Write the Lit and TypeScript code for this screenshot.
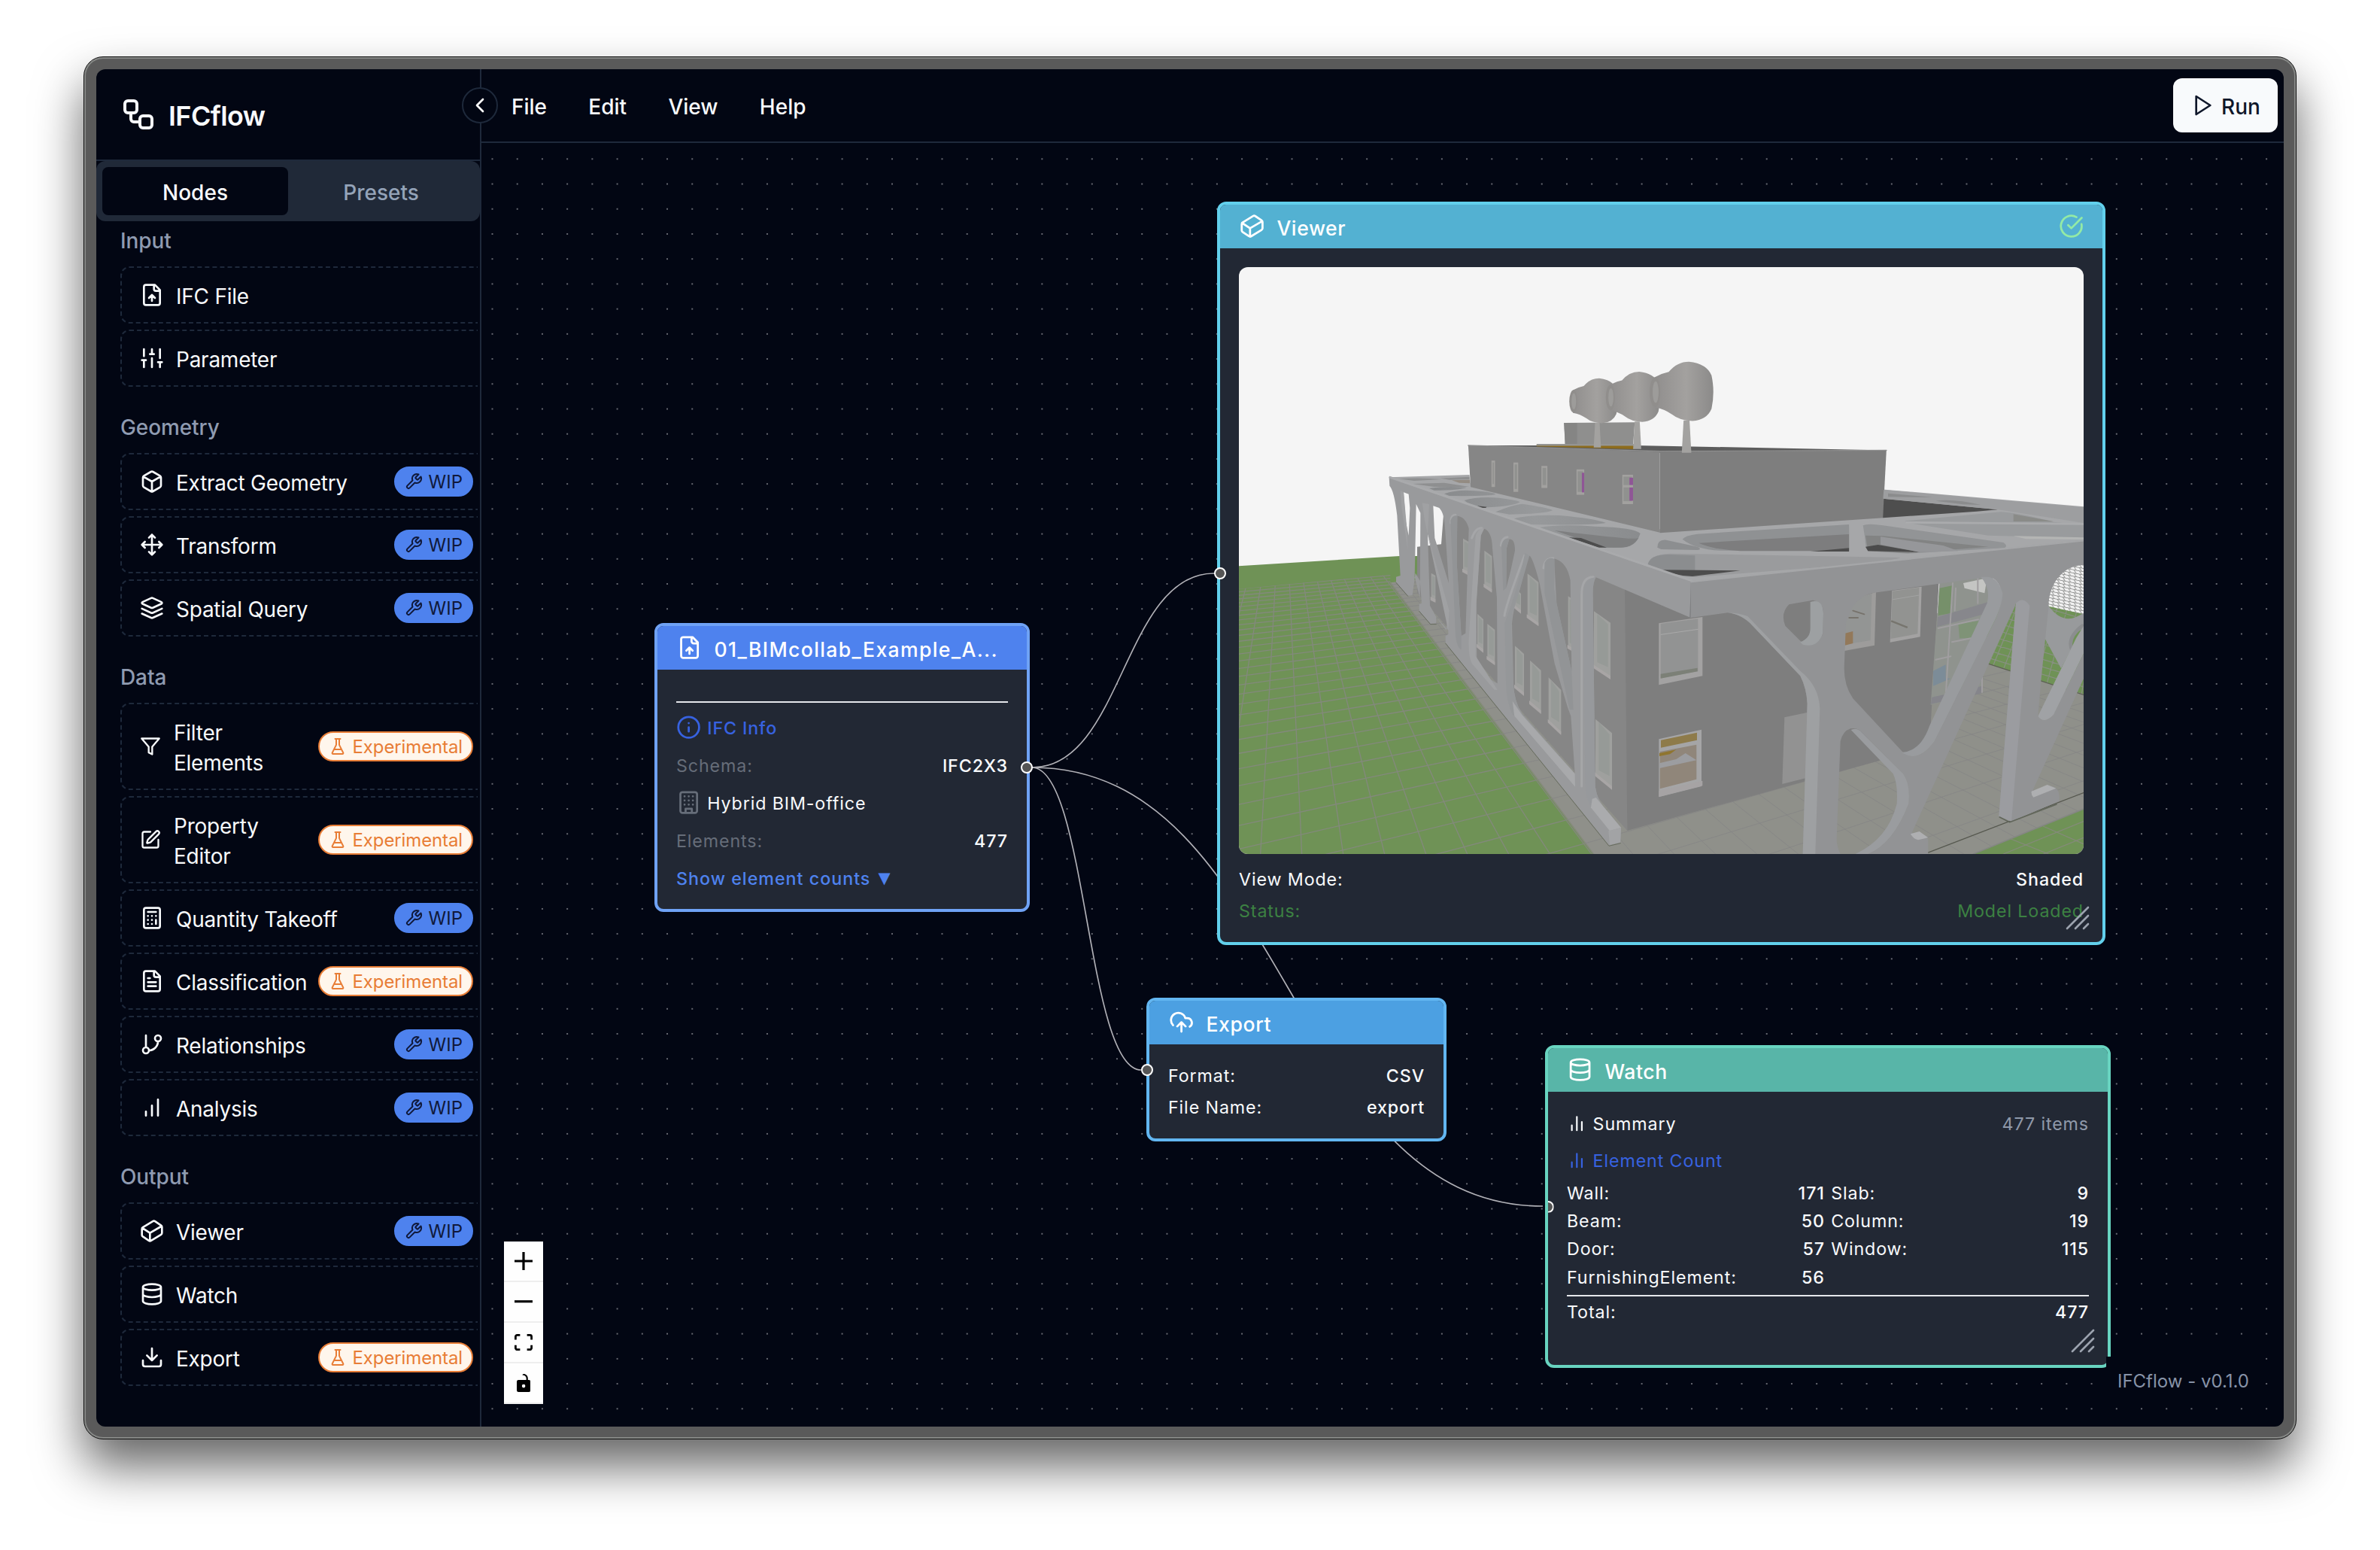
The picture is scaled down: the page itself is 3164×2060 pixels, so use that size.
import { LitElement, html, css, svg, nothing } from "lit";
import { customElement, property } from "lit/decorators.js";

const FILE = "M15 2H6a2 2 0 0 0-2 2v16a2 2 0 0 0 2 2h12a2 2 0 0 0 2-2V7Z M14 2v4a2 2 0 0 0 2 2h4";
const ICONS: Record<string, string> = {
  workflow: "M5 3h4a2 2 0 0 1 2 2v4a2 2 0 0 1-2 2H5a2 2 0 0 1-2-2V5a2 2 0 0 1 2-2z M7 11v4a2 2 0 0 0 2 2h4 M15 13h4a2 2 0 0 1 2 2v4a2 2 0 0 1-2 2h-4a2 2 0 0 1-2-2v-4a2 2 0 0 1 2-2z",
  chevron: "m15 18-6-6 6-6",
  play: "M5 3 19 12 5 21Z",
  fileUp: FILE + " M12 12v6 M15 15l-3-3-3 3",
  sliders: "M4 21v-7 M4 10V3 M12 21v-9 M12 8V3 M20 21v-5 M20 12V3 M2 14h4 M10 8h4 M18 16h4",
  box: "M21 8a2 2 0 0 0-1-1.73l-7-4a2 2 0 0 0-2 0l-7 4A2 2 0 0 0 3 8v8a2 2 0 0 0 1 1.73l7 4a2 2 0 0 0 2 0l7-4A2 2 0 0 0 21 16Z M3.3 7l8.7 5 8.7-5 M12 22V12",
  move: "M12 2v20 M2 12h20 M19 9l3 3-3 3 M5 9l-3 3 3 3 M9 5l3-3 3 3 M15 19l-3 3-3-3",
  layers: "M12.83 2.18a2 2 0 0 0-1.66 0L2.6 6.08a1 1 0 0 0 0 1.83l8.58 3.91a2 2 0 0 0 1.66 0l8.58-3.9a1 1 0 0 0 0-1.83Z M22 17.65l-9.17 4.16a2 2 0 0 1-1.66 0L2 17.65 M22 12.65l-9.17 4.16a2 2 0 0 1-1.66 0L2 12.65",
  filter: "M22 3H2l8 9.46V19l4 2v-8.54Z",
  pen: "M12 3H5a2 2 0 0 0-2 2v14a2 2 0 0 0 2 2h14a2 2 0 0 0 2-2v-7 M18.375 2.625a1 1 0 0 1 3 3l-9.013 9.014a2 2 0 0 1-.853.505l-2.873.84a.5.5 0 0 1-.62-.62l.84-2.873a2 2 0 0 1 .506-.852z",
  calculator: "M6 2h12a2 2 0 0 1 2 2v16a2 2 0 0 1-2 2H6a2 2 0 0 1-2-2V4a2 2 0 0 1 2-2z M8 6h8 M16 14v4 M16 10h.01 M12 10h.01 M8 10h.01 M12 14h.01 M8 14h.01 M12 18h.01 M8 18h.01",
  fileText: FILE + " M10 9H8 M16 13H8 M16 17H8",
  branch: "M6 3v12 M21 6a3 3 0 1 1-6 0a3 3 0 1 1 6 0 M9 18a3 3 0 1 1-6 0a3 3 0 1 1 6 0 M18 9a9 9 0 0 1-9 9",
  bars: "M12 20V10 M18 20V4 M6 20v-4",
  bars2: "M18 20V10 M12 20V4 M6 20v-6",
  cuboid: "M21.12 6.4l-6.05-4.06a2 2 0 0 0-2.17-.05L2.95 8.41a2 2 0 0 0-.95 1.7v5.82a2 2 0 0 0 .88 1.66l6.05 4.07a2 2 0 0 0 2.17.05l9.95-6.12a2 2 0 0 0 .95-1.7V8.06a2 2 0 0 0-.88-1.66Z M10 22v-8L2.25 8.85 M10 14l11.77-6.86",
  database: "M21 5a9 3 0 1 1-18 0a9 3 0 1 1 18 0 M3 5V19A9 3 0 0 0 21 19V5 M3 12A9 3 0 0 0 21 12",
  download: "M21 15v4a2 2 0 0 1-2 2H5a2 2 0 0 1-2-2v-4 M7 10l5 5 5-5 M12 15V3",
  wrench: "M14.7 6.3a1 1 0 0 0 0 1.4l1.6 1.6a1 1 0 0 0 1.4 0l3.77-3.77a6 6 0 0 1-7.94 7.94l-6.91 6.91a2.12 2.12 0 0 1-3-3l6.91-6.91a6 6 0 0 1 7.94-7.94l-3.76 3.76z",
  flask: "M10 2v7.527a2 2 0 0 1-.211.896L4.72 20.55a1 1 0 0 0 .9 1.45h12.76a1 1 0 0 0 .9-1.45l-5.069-10.127A2 2 0 0 1 14 9.527V2 M8.5 2h7 M7 16h10",
  info: "M22 12a10 10 0 1 1-20 0a10 10 0 1 1 20 0 M12 16v-4 M12 8h.01",
  building: "M6 2h12a2 2 0 0 1 2 2v16a2 2 0 0 1-2 2H6a2 2 0 0 1-2-2V4a2 2 0 0 1 2-2z M9 22v-4h6v4 M8 6h.01 M12 6h.01 M16 6h.01 M8 10h.01 M12 10h.01 M16 10h.01 M8 14h.01 M12 14h.01 M16 14h.01",
  check: "M21.801 10A10 10 0 1 1 17 3.335 M9 11l3 3L22 4",
  upload: "M4 14.899A7 7 0 1 1 15.71 8h1.79a4.5 4.5 0 0 1 2.5 8.242 M12 12v9 M16 16l-4-4-4 4",
};

const icon = (name: string, size: number) => html`<svg
  width=${size} height=${size} viewBox="0 0 24 24" fill="none" stroke="currentColor"
  stroke-width="2" stroke-linecap="round" stroke-linejoin="round" style="flex:none;display:block"
><path d=${ICONS[name]}></path></svg>`;

type Item = { icon: string; label: string; tag?: "wip" | "exp"; wrap?: boolean };
const SECTIONS: { title: string; items: Item[] }[] = [
  { title: "Input", items: [{ icon: "fileUp", label: "IFC File" }, { icon: "sliders", label: "Parameter" }] },
  {
    title: "Geometry",
    items: [
      { icon: "box", label: "Extract Geometry", tag: "wip" },
      { icon: "move", label: "Transform", tag: "wip" },
      { icon: "layers", label: "Spatial Query", tag: "wip" },
    ],
  },
  {
    title: "Data",
    items: [
      { icon: "filter", label: "Filter Elements", tag: "exp", wrap: true },
      { icon: "pen", label: "Property Editor", tag: "exp", wrap: true },
      { icon: "calculator", label: "Quantity Takeoff", tag: "wip" },
      { icon: "fileText", label: "Classification", tag: "exp" },
      { icon: "branch", label: "Relationships", tag: "wip" },
      { icon: "bars", label: "Analysis", tag: "wip" },
    ],
  },
  {
    title: "Output",
    items: [
      { icon: "cuboid", label: "Viewer", tag: "wip" },
      { icon: "database", label: "Watch" },
      { icon: "download", label: "Export", tag: "exp" },
    ],
  },
];

@customElement("flow-sidebar")
class FlowSidebar extends LitElement {
  static styles = css`
    :host { display: flex; flex-direction: column; width: 510px; border-right: 2px solid #1e293b; color: #f8fafc; }
    .brand { display: flex; align-items: center; gap: 16px; height: 120px; padding-left: 32px; border-bottom: 2px solid #1e293b; font-size: 36px; font-weight: 600; letter-spacing: -0.6px; }
    .brand span { margin: 2px 0 -2px; }
    .tabs { display: grid; grid-template-columns: 1fr 1fr; height: 80px; padding: 8px; background: #202938; border-radius: 12px; box-sizing: border-box; font-weight: 500; }
    .tab { display: flex; align-items: center; justify-content: center; border-radius: 8px; color: #94a3b8; padding-top: 3px; }
    .tab.on { background: #020613; color: #f8fafc; }
    .list { flex: 1; overflow: hidden; padding: 4px 0 0 32px; margin-right: 3px; display: flex; flex-direction: column; gap: 32px; }
    .group { display: flex; flex-direction: column; gap: 8px; }
    .title { line-height: 40px; margin: 2px 0 6px; color: #8f9bb1; font-weight: 500; letter-spacing: -0.1px; }
    .item { display: flex; align-items: center; gap: 16px; width: 495px; box-sizing: border-box; padding: 16px 24px; border: 2px dashed #1e293b; border-radius: 12px; line-height: 40px; }
    .label { flex: 1; min-width: 0; white-space: nowrap; margin: 2px 0 -2px; letter-spacing: -0.25px; }
    .wrap .label { white-space: normal; margin-left: 1px; }
    .tag { display: flex; align-items: center; gap: 8px; height: 40px; flex: none; padding: 0 12px; box-sizing: border-box; border: 2px solid #4e82ee; border-radius: 20px; background: #4e82ee; color: #10193a; font-size: 24px; white-space: nowrap; }
    .tag span { margin: 1px 0 -1px; }
    .tag.exp { border-color: #e87d36; background: #fff6ec; color: #e87d36; letter-spacing: -0.12px; }
  `;
  render() {
    return html`
      <div class="brand">${icon("workflow", 48)}<span>IFCflow</span></div>
      <div class="tabs"><div class="tab on">Nodes</div><div class="tab">Presets</div></div>
      <div class="list">
        ${SECTIONS.map((s) => html`<div class="group">
          <div class="title">${s.title}</div>
          ${s.items.map((i) => html`<div class="item ${i.wrap ? "wrap" : ""}">
            ${icon(i.icon, i.wrap ? 28 : 32)}
            <span class="label">${i.label}</span>
            ${i.tag === "wip" ? html`<span class="tag">${icon("wrench", 24)}<span>WIP</span></span>` : nothing}
            ${i.tag === "exp" ? html`<span class="tag exp">${icon("flask", 24)}<span>Experimental</span></span>` : nothing}
          </div>`)}
        </div>`)}
      </div>
    `;
  }
}

/* ---- 3D scene of the model viewer ---- */

const poly = (points: string, fill: string) => svg`<polygon points=${points} fill=${fill}></polygon>`;
const shape = (d: string, fill: string) => svg`<path d=${d} fill=${fill}></path>`;
const line = (d: string, stroke: string, w: number) => svg`<path d=${d} fill="none" stroke=${stroke} stroke-width=${w} stroke-linecap="round" stroke-linejoin="round"></path>`;

/* vanishing points of the two ground directions */
const LEFT_VP = [-343, -83];
const RIGHT_VP = [6710, -133];

const groundRows = () => {
  let d = "";
  for (let k = -7; k < 34; k++) {
    const y = -83 + 1 / (6.653e-4 + 4.1e-5 * k);
    const slope = (RIGHT_VP[1] - y) / RIGHT_VP[0];
    d += `M-540 ${(y - 540 * slope).toFixed(1)}L2900 ${(y + 2900 * slope).toFixed(1)}`;
  }
  return d;
};
const groundColumns = () => {
  let d = "";
  for (let x = -4063; x < 4600; x += 165) d += `M${LEFT_VP[0]} ${LEFT_VP[1]}L${x} 1560`;
  return d;
};

const windowLeft = (x: number, y: number, w: number, h: number, skew: number) => svg`
  <polygon points="${x},${y} ${x + w},${y + skew} ${x + w},${y + h + skew} ${x},${y + h}" fill="#9fa09e"></polygon>
  <polygon points="${x + w * 0.2},${y + 12} ${x + w * 0.85},${y + skew + 6} ${x + w * 0.85},${y + h + skew * 0.4 - 18} ${x + w * 0.2},${y + h - 18}" fill="#969a97"></polygon>
  <polygon points="${x - 3},${y + h - 10} ${x + w},${y + h + skew - 10} ${x + w},${y + h + skew + 4} ${x - 3},${y + h + 4}" fill="#a8a5a5"></polygon>`;

const tree = (x: number, y: number, s: number) => svg`<g transform="translate(${x} ${y}) scale(${s})">
  <path d="M-5 58L5 58L8 124L-8 124Z" fill="#a3a2a0"></path>
  <path d="M-54 -30Q-42 -38 -30 -41Q-16 -62 4 -62Q34 -58 42 -34Q48 0 42 34Q34 57 10 59Q-12 58 -24 46Q-38 34 -54 31Q-60 2 -54 -30Z" fill="url(#bark)"></path>
  <ellipse cx="-53" cy="0" rx="9" ry="30" fill="#908e8c"></ellipse>
  <ellipse cx="-52" cy="0" rx="5" ry="22" fill="#9d9c9a"></ellipse></g>`;

const HOLES_LEFT =
  "M138 118L158 125L163 180L158 290L146 230Z" +
  "M188 165L205 200L203 540L182 455Z" +
  "M256 172L280 180Q300 200 303 260L318 480L262 300Z" +
  "M234 285L316 590L308 668L268 615L243 570Z" +
  "M352 212Q385 215 398 262L385 680L368 690L350 400Z" +
  "M455 262Q490 270 492 340L510 540L512 880Q450 850 430 790L428 560L446 290Z" +
  "M558 305Q582 302 582 350L565 430L547 500L549 340Z" +
  "M636 370Q650 365 680 480L740 800L792 975L805 1010L821 1240L610 1000Q578 950 576 880L570 640Q575 580 600 510Z" +
  "M738 382Q790 395 803 470L808 830L748 560Z";

const scene = () => html`<svg width="1123" height="780" viewBox="1647 355 1123 780" preserveAspectRatio="none" style="display:block">
  <defs>
    <linearGradient id="bark"><stop offset="0" stop-color="#8f8d8c"></stop><stop offset=".55" stop-color="#a3a19f"></stop><stop offset="1" stop-color="#8b8a89"></stop></linearGradient>
    <linearGradient id="curve"><stop offset="0" stop-color="#87898b"></stop><stop offset=".5" stop-color="#97999b"></stop><stop offset="1" stop-color="#8a8c8e"></stop></linearGradient>
    <clipPath id="lawn"><polygon points="-540,505 85,446 85,478 895,1560 -540,1560"></polygon></clipPath>
    <clipPath id="paving"><polygon points="85,478 195,470 1030,1467 2235,1130 2460,800 2850,930 2850,1378 2410,1560 895,1560"></polygon></clipPath>
    <clipPath id="lawnFar"><polygon points="1175,800 1290,560 1560,560 1560,925"></polygon></clipPath>
    <pattern id="mesh" width="22" height="13" patternUnits="userSpaceOnUse" patternTransform="skewY(11)"><rect width="22" height="13" fill="#f1f1f1"></rect><path d="M0 1H22M3 1L12 13" stroke="#8e8f8e" stroke-width="3"></path></pattern>
  </defs>
  <rect x="1647" y="355" width="1123" height="780" fill="#f5f5f5"></rect>
  <g transform="translate(1820 615) scale(.33333)">
    ${poly("-540,413 122,372 400,372 400,600 1000,1560 -540,1560", "#6f9256")}
    ${poly("85,478 200,465 400,500 2235,600 2850,600 2850,1560 895,1560", "#8f908a")}
    <g clip-path="url(#lawn)">${line(groundRows(), "#83897c", 4)}${line(groundColumns(), "#83897c", 4)}</g>
    ${line("M85 478L895 1560", "#858a7b", 5)}
    <g clip-path="url(#paving)">${line(groundRows(), "#858686", 2.5)}${line(groundColumns(), "#858686", 2.5)}</g>
    ${poly("192,335 288,325 300,170 1025,480 1030,1467 192,519", "#868686")}
    ${poly("1020,480 1560,400 2275,440 2235,1132 1030,1467", "#7e7e7e")}
    ${windowLeft(248, 440, 17, 104, 10)}${windowLeft(375, 302, 24, 130, 14)}${windowLeft(460, 350, 30, 142, 22)}
    ${windowLeft(432, 602, 24, 130, 22)}${windowLeft(472, 642, 30, 138, 24)}${windowLeft(582, 500, 24, 76, 22)}
    ${windowLeft(632, 442, 44, 172, 34)}${windowLeft(582, 730, 36, 164, 32)}${windowLeft(642, 788, 44, 170, 40)}
    ${windowLeft(716, 856, 50, 176, 50)}${windowLeft(794, 532, 30, 204, 20)}
    ${windowLeft(897, 592, 66, 222, 46)}${windowLeft(903, 1022, 66, 222, 56)}
    ${poly("1156,640 1330,615 1330,850 1156,886", "#a3a2a2")}${poly("1163,642 1312,622 1312,832 1163,858", "#929393")}${poly("1163,842 1310,818 1310,832 1163,860", "#7c8077")}${line("M1165 685L1312 664", "#aaa", 3)}
    ${poly("1156,1102 1326,1064 1326,1290 1156,1333", "#a5a5a6")}${poly("1164,1106 1308,1076 1308,1106 1164,1136", "#8e7b4a")}${poly("1160,1152 1306,1124 1306,1262 1160,1300", "#90867a")}${poly("1158,1198 1225,1182 1262,1158 1306,1186 1158,1218", "#9c9da0")}${poly("1158,1158 1225,1144 1200,1162 1158,1170", "#8f752f")}
    ${poly("1156,1308 1330,1268 1330,1288 1156,1332", "#a6a3a4")}
  </g>
  <g transform="translate(2250 615) scale(.33333)">
    ${poly("1150,520 1560,400 1560,925 1175,800", "#6f9256")}
    <g clip-path="url(#lawnFar)" >${line(Array.from({ length: 16 }, (_, i) => `M1120 ${460 + i * 30}L1580 ${600 + i * 30}M${1100 + i * 40} 560L${900 + i * 50} 930`).join(""), "#899083", 3.5)}</g>
    ${line("M1175 800L1560 925", "#5d6153", 4)}
    ${poly("1410,400 1560,400 1560,604 1420,572", "url(#mesh)")}
    ${poly("985,480 1200,440 1150,915 950,965", "#8f938e")}
    ${poly("985,500 1035,490 1030,600 980,610", "#76906a")}${poly("1080,480 1175,460 1165,520 1085,500", "#c4c5c3")}${poly("1060,640 1145,630 1130,700 1065,700", "#7f9377")}
    ${poly("978,615 1180,555 1175,600 975,655", "#87878c")}${poly("960,830 1010,805 1010,860 1030,860 960,890", "#7c8c98")}${poly("955,935 1155,890 1150,920 950,962", "#85858b")}
    ${line("M1038 480L1010 930M1138 460V560M970 785L1030 772M980 660L1140 625M1035 715L1110 700M1155 830V915M1050 500L1046 590", "#a09ea0", 6)}
    ${poly("595,560 732,515 726,728 606,750", "#9d9c9b")}${poly("600,560 715,522 710,708 606,725", "#939594")}${poly("608,680 640,672 640,720 608,728", "#93795a")}${line("M640 590L685 604M625 618L660 618", "#77736c", 6)}
    ${poly("796,510 914,494 908,694 788,716", "#a3a2a2")}${poly("798,512 904,498 898,682 790,702", "#929391")}${line("M795 632L855 656", "#77756e", 7)}${line("M800 545L905 528", "#a2a3a2", 3)}
    ${poly("367,1015 460,995 450,1258 358,1281", "#929292")}
    ${line("M930 1558L1560 1316", "#56584f", 4)}
    ${poly("1120,1560 1560,1380 1560,1560", "#6f9256")}${line("M1120 1560L1560 1380", "#858784", 5)}
    ${line("M1270 1500L1420 1560M1400 1450L1560 1520M1240 1560L1560 1430M1400 1560L1560 1495", "#858a7b", 3.5)}
  </g>

  <g transform="translate(1600 240) scale(.7908 .6505)">
    ${poly("312,606 447,601 449,620 767,712 1142,684 1142,631 1480,666 1480,735 820,822", "#a6a7a9")}
    ${poly("1142,650 1335,672 1300,676 1142,689", "#4e4e4e")}
    ${poly("606,495 725,494 722,542 608,541", "#8f8f8e")}${poly("606,495 628,495 628,541 608,541", "#858584")}
    ${poly("445,541 725,541 1148,551 767,556", "#5c5c5c")}${poly("560,539 725,539 725,549 560,543", "#8d6c1d")}${poly("560,538 725,538 725,542 560,542", "#959593")}
    ${poly("445,541 767,554 767,719 449,626", "#868686")}${poly("767,554 1148,551 1142,689 767,720", "#7e7e7e")}
    ${line("M445 541L767 553L1148 551", "#8e8e8e", 2)}
    ${tree(662, 451, 0.76)}${tree(729, 443, 0.85)}${tree(812, 432, 1)}
    ${[[484, 572, 6, 54], [521, 576, 8, 60], [568, 583, 10, 45], [627, 590, 13, 52], [704, 601, 18, 60]].map(([x, y, w, h]) => svg`<rect x=${x} y=${y} width=${w} height=${h} fill="#a2a19f"></rect><rect x=${x + 2} y=${y + 4} width=${w - 4} height=${h - 10} fill="#90918f"></rect>`)}
    <rect x="636" y="597" width="4" height="40" fill="#8f5696"></rect><rect x="716" y="607" width="6" height="47" fill="#8f5696"></rect><rect x="705" y="622" width="17" height="5" fill="#a2a19f"></rect>
  </g>

  <g transform="translate(1820 615) scale(.33333)">
    ${shape("M120 64Q200 58 290 66L180 72ZM285 62L400 56V66L320 68ZM175 84L300 80L400 96L260 96Z", "#8e8f90")}${poly("330,70 402,68 402,82 360,80", "#938b82")}
    ${shape("M240 102Q300 92 390 98Q360 110 260 110ZM300 124Q350 106 420 112Q500 118 505 126Q480 134 320 132ZM380 150Q430 134 520 140Q610 152 600 158Q560 176 450 178Q400 170 380 150ZM505 196Q570 168 610 164Q720 180 732 190Q700 204 560 206ZM575 224Q640 206 760 210Q900 222 945 240Q900 250 640 246ZM680 258Q760 244 900 254Q1060 258 1082 282Q1070 320 1040 332Q960 350 860 320Q720 285 680 258Z", "url(#curve)")}
    ${shape("M740 270Q900 290 1010 300Q1060 305 1075 300Q1050 340 1000 338L940 338Z", "#7e7f80")}${poly("795,298 845,300 948,338 915,338", "#4d4d4d")}${poly("432,172 470,176 465,180 445,180", "#4d4d4d")}
    ${shape("M1150 338Q1150 305 1185 308L1310 335Q1330 345 1310 348L1165 345Z", "#8c8e90")}
    ${shape("M1250 305Q1260 290 1310 284L1915 246L1920 350L1400 350Q1300 345 1250 305Z", "#8f9193")}
    ${shape("M1315 320L1915 285V352L1480 352Q1370 345 1315 320Z", "#7d7d7e")}${poly("1760,354 1915,340 1915,354", "#4c4c4c")}
    ${shape("M1112 410Q1120 365 1200 362L2120 378Q2080 395 1860 412L1300 456Q1150 450 1112 410Z", "#9a9b9d")}${shape("M1112 405Q1120 365 1200 366L1300 370V430L1170 428Z", "#8b8d8f")}${shape("M1165 427L1480 430L1290 453Q1220 450 1165 427Z", "#4d4d4d")}
    <path d="M80 58L1288 474L1283 618L905 457Q890 480 893 540L902 1290Q910 1350 950 1390L1005 1455L1003 1515L957 1525L305 718V690L316 684L316 668L268 615V640L245 642L200 590V563L210 560L203 470L185 440L173 528L155 530L108 476V455L125 450L112 210Q100 110 82 92Z${HOLES_LEFT}" fill="#999a9c" fill-rule="evenodd"></path>
    ${line("M84 58L1286 470", "#a9aaac", 9)}
    ${line("M326 240Q326 208 345 208M410 300Q425 258 450 260M526 330Q530 298 552 296M540 610Q545 570 620 370M696 420Q700 380 735 380M848 1290V520Q850 455 895 455", "#a5a6a8", 9)}
    ${shape("M325 230Q335 206 352 212L350 400L368 690V745Q352 740 345 690Z", "#929496")}${shape("M425 290Q438 258 460 262L446 290L428 560L425 770L512 905L500 905L410 800Q395 770 398 700Z", "#a1a2a4")}
    ${shape("M528 330Q535 298 560 304L549 340L547 500L535 510Z", "#929496")}${shape("M555 600Q590 510 622 360L640 370L600 510L572 600Q566 640 568 700L576 900Q585 965 610 1000L821 1240L822 1292L570 1000Q548 950 546 880L541 640Z", "#959799")}${shape("M572 950L610 1005L821 1240L822 1292L580 1010Z", "#a8a9ab")}
    ${shape("M700 400Q712 372 740 384L738 500L748 560L808 830L815 985L800 985L700 520Z", "#929496")}
    ${shape("M855 520Q860 460 905 457Q890 480 893 540L902 1290Q910 1350 950 1390L1005 1455L960 1465L885 1370Q862 1330 862 1270Z", "#97999c")}${poly("890,1340 905,1335 1005,1455 960,1468 885,1375", "#aaabad")}${poly("955,1468 1005,1455 1002,1513 960,1524", "#a2a3a5")}
    ${shape("M125 110L138 118L150 250L155 350L130 180ZM212 160L240 165L234 285L320 590L316 668L222 230Z", "#a0a1a3")}
    ${line("M108 478L155 532M200 592L245 644H268M305 720L957 1528L1003 1517", "#666b5e", 3)}
    ${line("M1286 474L1281 616", "#77797b", 4)}
  </g>

  <g transform="translate(2250 615) scale(.33333)">
    ${poly("763,108 1560,178 1560,240 1220,187 760,143", "#9d9ea0")}${shape("M780 122L960 138L780 136ZM970 152Q1040 142 1150 168L1080 166Z", "#8b8c8d")}
    ${shape("M680 250Q700 240 760 250L1240 318Q1262 335 1240 340L860 362L700 352Q690 340 688 300Z", "#929496")}${shape("M690 290L760 292L1180 335L860 360L700 352Z", "#828383")}${poly("690,335 740,327 905,356 700,352", "#4b4b4b")}${poly("750,295 1000,330 1060,352 905,356 750,326", "#96979a")}
    ${poly("625,240 672,240 690,354 625,354", "#a6a7a9")}
    ${shape("M850 232L1230 196Q1300 200 1440 236L1560 248V300L1180 290Q1000 262 850 238Z", "#999b9d")}${poly("1280,205 1440,234 1280,234", "#8a8b88")}${poly("850,234 1560,240 1560,248 850,242", "#aaabad")}${poly("1280,292 1560,298 1560,306 1330,304", "#b4b5b4")}
    ${shape("M1405 600L1420 570Q1470 640 1530 615L1560 600V650L1470 820L1405 700Z", "#989a9c")}${shape("M1510 760Q1500 690 1560 660V720Z", "#6f9256")}${line("M1515 750Q1490 700 1555 650", "#8b8d8f", 14)}
    <path d="M-7 474L1560 308V408C1480 408 1420 480 1420 575L1390 870L1378 1010Q1400 1045 1440 1005L1560 760V860L1360 1300L1355 1330L1420 1288Q1470 1290 1462 1350L1272 1430L1222 1410L1290 560Q1290 560 1285 575L875 1475L940 1500V1560H440L458 960Q455 900 430 850L240 650Q190 600 140 598L-7 618Z
      M715 520L1180 455Q1220 460 1235 520Q1235 560 1210 620L965 1110Q900 1200 840 1155L640 940Q605 890 605 820L612 640Q640 540 715 520Z
      M385 565L480 548Q525 560 522 600L520 680Q500 740 440 720L370 650Q350 600 385 565Z
      M630 1060Q655 1055 670 1070L840 1240Q870 1280 862 1360Q800 1520 700 1560L590 1560Q575 1530 575 1500L590 1110Q600 1070 630 1060Z" fill="#929395" fill-rule="evenodd"></path>
    ${shape("M140 598Q190 600 220 612L430 830Q505 890 508 980L490 1560H440L458 960Q455 900 430 850L240 650Q200 605 140 598Z", "#9ea0a2")}
    ${shape("M470 555Q520 540 522 600L520 680Q500 740 440 725L430 715Q470 700 470 660Z", "#9da0a2")}
    ${shape("M1180 455Q1220 460 1237 520Q1237 560 1210 620L965 1110Q900 1200 835 1155Q910 1150 945 1050L1175 560Q1190 500 1150 455Z", "#999b9e")}
    ${shape("M632 1065Q655 1055 670 1070L840 1240Q870 1280 862 1360Q800 1520 700 1560H650Q780 1500 815 1360Q820 1280 800 1240Z", "#9a9c9f")}
    ${shape("M1290 560Q1320 530 1345 570L1310 980L1272 1430L1222 1410Z", "#9b9ca0")}${shape("M1378 1010L1530 700L1560 650V760L1440 1005Q1400 1045 1378 1010Z", "#a0a2a5")}
    ${shape("M1352 1310L1415 1284L1450 1298L1360 1334Q1350 1325 1352 1310ZM870 1480L905 1470L940 1495L900 1504Q880 1500 870 1480Z", "#aeafb1")}
    ${line("M-5 474L1560 310", "#a5a6a8", 7)}${line("M1225 1413L1265 1433L1452 1362", "#61665a", 5)}
  </g>
</svg>`;

@customElement("flow-node")
class FlowNode extends LitElement {
  @property() icon = "";
  @property() label = "";
  @property({ type: Boolean }) done = false;
  @property({ type: Boolean }) grip = false;
  static styles = css`
    :host { display: flex; flex-direction: column; position: absolute; box-sizing: border-box; border: 4px solid var(--edge); border-radius: 12px; background: #222834; color: #f8fafc; font-size: 23.26px; letter-spacing: 0.88px; overflow: hidden; }
    .head { display: flex; align-items: center; gap: 16.6px; height: 58px; flex: none; padding: 0 25px 0 25.6px; background: var(--fill); color: #fff; font-size: 26.6px; font-weight: 500; letter-spacing: var(--track, 0.6px); }
    .name { flex: 1; white-space: nowrap; line-height: 40px; margin: 2px 0 -2px; }
    .ok { color: #93eaa6; display: flex; }
    .body { flex: 1; padding: 0 25px; display: flex; flex-direction: column; }
    .grip { position: absolute; right: 17px; bottom: 16px; display: block; }
  `;
  render() {
    return html`
      <div class="head">${icon(this.icon, 33.2)}<span class="name">${this.label}</span>
        ${this.done ? html`<span class="ok">${icon("check", 33.2)}</span>` : nothing}</div>
      <div class="body"><slot></slot></div>
      ${this.grip ? html`<svg class="grip" width="32" height="32" viewBox="0 0 32 32" stroke="#9ca3af" stroke-width="2.6" stroke-linecap="round"><path d="M2 30L30 2M13 30L30 13M24 30L30 24"></path></svg>` : nothing}
    `;
  }
}

const EDGES: [number, number, number, number][] = [
  [732, 830, 974, 572],
  [732, 830, 877, 1232],
  [732, 830, 1411, 1413],
];
const COUNTS: [string, string][] = [
  ["Wall:", "171"], ["Slab:", "9"], ["Beam:", "50"], ["Column:", "19"], ["Door:", "57"], ["Window:", "115"], ["FurnishingElement:", "56"],
];

@customElement("app-root")
class AppRoot extends LitElement {
  static styles = css`
    :host { display: block; box-sizing: border-box; width: 3164px; height: 2060px; padding: 75px 111px 0; background: #fff; overflow: hidden; font-family: Inter, "Liberation Sans", sans-serif; font-size: 28px; }
    .frame { box-sizing: border-box; width: 2942px; height: 1838px; border: 1px solid #0a0a0a; border-radius: 26px; background: #5a5a5a; background-clip: padding-box; box-shadow: inset 0 0 0 2px #868886, 0 36px 64px rgba(0, 0, 0, 0.6); padding: 16px; }
    .window { display: flex; height: 1804px; width: 2908px; background: #020613; border-radius: 12px; overflow: hidden; position: relative; }
    .main { flex: 1; display: flex; flex-direction: column; min-width: 0; }
    .bar { display: flex; align-items: center; height: 96px; border-bottom: 2px solid #1e293b; color: #f8fafc; font-weight: 500; padding: 0 8px 0 40px; }
    .menu { display: flex; gap: 55.3px; flex: 1; margin: 2px 0 -2px; }
    .run { display: flex; align-items: center; gap: 8px; width: 139px; height: 72px; box-sizing: border-box; padding-left: 24px; border-radius: 12px; background: #f8fafc; color: #0f172a; }
    .run span { margin: 2px 0 -2px; }
    .toggle { position: absolute; left: 486px; top: 24px; width: 48px; height: 48px; box-sizing: border-box; display: flex; align-items: center; justify-content: center; border: 2px solid #1e293b; border-radius: 50%; background: #020613; color: #fff; }
    .canvas { position: relative; flex: 1; overflow: hidden; }
    .dots, .edges { position: absolute; left: 0; top: 0; }
    .ifc { left: 230px; top: 638px; width: 499px; height: 384px; --edge: #6fa2f5; --fill: #4e82ee; --track: 1.35px; }
    .viewer { left: 978px; top: 78px; width: 1181px; height: 988px; --edge: #62d0ec; --fill: #53b1d2; }
    .export { left: 884px; top: 1136px; width: 399px; height: 191px; --edge: #62b6f1; --fill: #4ca0e2; }
    .watch { left: 1414px; top: 1199px; width: 752px; height: 429px; --edge: #68d4c0; --fill: #58b5a8; }
    .row { display: flex; align-items: center; justify-content: space-between; white-space: nowrap; }
    .lead { justify-content: flex-start; gap: 8px; }
    .ifc .row { height: 50px; }
    .ifc .rule { margin: 42px 0 8px; }
    .rule { height: 2px; flex: none; background: #e5e7eb; }
    .med { font-weight: 500; }
    .blue { color: #3762e0; }
    .sky { color: #4e82ee; letter-spacing: 1px; }
    .dim { color: #666d79; }
    .items { color: #8f99aa; }
    .tri { font-family: "DejaVu Sans", sans-serif; font-size: 21px; margin-left: 2px; }
    .picture { margin-top: 25px; height: 780px; border-radius: 12px; overflow: hidden; flex: none; }
    .viewer .row, .export .row { height: 41.7px; }
    .viewer .first { margin-top: 13px; }
    .export .first { margin-top: 21px; }
    .green { color: #3c8142; }
    .watch .row { height: 49px; }
    .watch .summary { margin-top: 18px; }
    .grid { display: grid; grid-template-columns: 1fr 1fr; column-gap: 8.3px; }
    .watch .grid .row, .watch .total { height: 37.2px; }
    .watch .rule { margin: 5px 0 2px; }
    .handle { position: absolute; width: 16px; height: 16px; box-sizing: border-box; border: 2px solid #fff; border-radius: 50%; background: #555; }
    .h1 { left: 716.5px; top: 822px; }
    .h2 { left: 974px; top: 564px; }
    .h3 { left: 876.5px; top: 1224px; }
    .h4 { left: 1409.5px; top: 1405.5px; clip-path: inset(0 0 0 8.5px); }
    .controls { position: absolute; left: 30px; top: 1460px; width: 52px; display: flex; flex-direction: column; }
    .ctl { height: 54px; box-sizing: border-box; border-bottom: 2px solid #eee; background: #fefefe; display: flex; align-items: center; justify-content: center; }
    .version { position: absolute; right: 31px; bottom: 30px; width: 205px; height: 63px; box-sizing: border-box; padding-top: 1px; display: flex; align-items: center; justify-content: center; background: #020613; color: #8793a8; font-size: 24px; white-space: nowrap; }
  `;
  render() {
    return html`<div class="frame"><div class="window">
      <flow-sidebar></flow-sidebar>
      <div class="main">
        <div class="bar">
          <div class="menu"><span>File</span><span>Edit</span><span>View</span><span>Help</span></div>
          <div class="run">${icon("play", 32)}<span>Run</span></div>
        </div>
        <div class="canvas">
          <svg class="dots" width="2396" height="1706">
            <defs><pattern id="p" x="-2.11" y="4.69" width="33.22" height="33.22" patternUnits="userSpaceOnUse"><circle cx="16.61" cy="16.61" r="1" fill="#8a8b93"></circle></pattern></defs>
            <rect width="2396" height="1706" fill="url(#p)"></rect>
          </svg>
          <svg class="edges" width="2396" height="1706" fill="none" stroke="#b1b1b7" stroke-width="1.66">
            ${EDGES.map(([a, b, c, d]) => svg`<path d="M${a},${b} C${(a + c) / 2},${b} ${(a + c) / 2},${d} ${c},${d}"></path>`)}
          </svg>
          <flow-node class="ifc" icon="fileUp" label="01_BIMcollab_Example_A...">
            <div class="rule"></div>
            <div class="row lead blue med">${icon("info", 33.2)}<span>IFC Info</span></div>
            <div class="row"><span class="dim">Schema:</span><span class="med">IFC2X3</span></div>
            <div class="row lead"><span class="dim">${icon("building", 33.2)}</span><span>Hybrid BIM-office</span></div>
            <div class="row"><span class="dim">Elements:</span><span class="med">477</span></div>
            <div class="row lead sky med"><span>Show element counts</span><span class="tri">▼</span></div>
          </flow-node>
          <flow-node class="viewer" icon="cuboid" label="Viewer" done grip>
            <div class="picture">${scene()}</div>
            <div class="row first"><span>View Mode:</span><span class="med">Shaded</span></div>
            <div class="row green"><span>Status:</span><span>Model Loaded</span></div>
          </flow-node>
          <flow-node class="export" icon="upload" label="Export">
            <div class="row first"><span>Format:</span><span class="med">CSV</span></div>
            <div class="row"><span>File Name:</span><span class="med">export</span></div>
          </flow-node>
          <flow-node class="watch" icon="database" label="Watch" grip>
            <div class="row summary"><div class="row lead">${icon("bars2", 26.6)}<span>Summary</span></div><span class="items">477 items</span></div>
            <div class="row lead blue">${icon("bars2", 26.6)}<span>Element Count</span></div>
            <div class="grid">${COUNTS.map(([k, v]) => html`<div class="row"><span>${k}</span><span class="med">${v}</span></div>`)}</div>
            <div class="rule"></div>
            <div class="row total"><span>Total:</span><span class="med">477</span></div>
          </flow-node>
          <div class="handle h1"></div><div class="handle h2"></div><div class="handle h3"></div><div class="handle h4"></div>
          <div class="controls">
            <div class="ctl"><svg width="24" height="24" viewBox="0 0 32 32"><path d="M32 18.133H18.133V32h-4.266V18.133H0v-4.266h13.867V0h4.266v13.867H32z"></path></svg></div>
            <div class="ctl"><svg width="24" height="4" viewBox="0 0 32 5"><path d="M0 0h32v4.2H0z"></path></svg></div>
            <div class="ctl"><svg width="24" height="22.5" viewBox="0 0 32 30"><path d="M3.692 4.63c0-.53.4-.938.939-.938h5.215V0H4.708C2.13 0 0 2.054 0 4.63v5.216h3.692V4.631zM27.354 0h-5.2v3.692h5.17c.53 0 .984.4.984.939v5.215H32V4.631A4.624 4.624 0 0 0 27.354 0zm.954 24.83c0 .532-.4.94-.939.94h-5.215v3.768h5.215c2.577 0 4.631-2.13 4.631-4.707v-5.139h-3.692v5.139zm-23.677.94c-.531 0-.939-.4-.939-.94v-5.138H0v5.139c0 2.577 2.13 4.707 4.708 4.707h5.138V25.77H4.631z"></path></svg></div>
            <div class="ctl"><svg width="18.7" height="24" viewBox="0 0 25 32"><path d="M21.333 10.667H19.81V7.619C19.81 3.429 16.38 0 12.19 0c-4.114 1.828-1.37 2.133.305 2.438 1.676.305 4.42 2.59 4.42 5.181v3.048H3.047A3.056 3.056 0 000 13.714v15.238A3.056 3.056 0 003.048 32h18.285a3.056 3.056 0 003.048-3.048V13.714a3.056 3.056 0 00-3.048-3.047zM12.19 24.533a3.056 3.056 0 01-3.047-3.047 3.056 3.056 0 013.047-3.048 3.056 3.056 0 013.048 3.048 3.056 3.056 0 01-3.048 3.047z"></path></svg></div>
          </div>
          <div class="version">IFCflow - v0.1.0</div>
        </div>
      </div>
      <div class="toggle">${icon("chevron", 32)}</div>
    </div></div>`;
  }
}
